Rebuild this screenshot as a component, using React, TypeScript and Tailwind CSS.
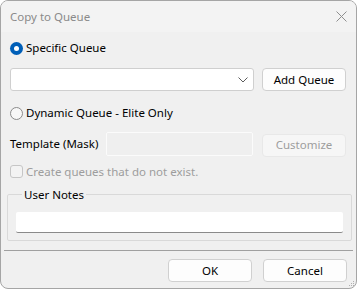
import React from 'react';

const font = { fontFamily: '"Segoe UI", "Noto Sans", sans-serif' };

function Radio({ checked, label }: { checked?: boolean; label: string }) {
  return (
    <label className="flex items-center gap-[3px] h-[14px] text-[11.5px] text-black">
      {checked ? (
        <span className="w-[13px] h-[13px] rounded-full bg-[#005fb8] flex items-center justify-center shrink-0">
          <span className="w-[5px] h-[5px] rounded-full bg-white" />
        </span>
      ) : (
        <span className="w-[13px] h-[13px] rounded-full border border-[#8b8b8b] bg-[#f7f7f7] shrink-0" />
      )}
      <span className="leading-none">{label}</span>
    </label>
  );
}

function Button({ children, disabled }: { children: React.ReactNode; disabled?: boolean }) {
  return (
    <button
      className={`w-[84px] h-[23px] rounded-[4px] border text-[11.5px] leading-none ${
        disabled ? 'bg-[#f6f6f6] border-[#e8e8e8] text-[#9d9d9d]' : 'bg-[#fdfdfd] border-[#d0d0d0] text-black'
      }`}
    >
      {children}
    </button>
  );
}

export default function App() {
  return (
    <div className="w-[358px] h-[289px] bg-white" style={font}>
      <div className="w-[357px] h-[289px] rounded-lg border border-[#a5a5a5] overflow-hidden flex flex-col bg-[#f0f0f0]">
        {/* Title bar */}
        <div className="h-[31px] bg-[#f3f3f3] flex items-center justify-between pl-[9px] pr-[9px] shrink-0">
          <span className="text-[11.5px] text-[#8a8a8a]">Copy to Queue</span>
          <svg width="11" height="11" viewBox="0 0 11 11">
            <path d="M0.5 0.5 L10.5 10.5 M10.5 0.5 L0.5 10.5" stroke="#8e8e8e" strokeWidth="1" />
          </svg>
        </div>

        {/* Body */}
        <div className="flex-1 flex flex-col px-[9px] relative">
          <div className="mt-[9px]">
            <Radio checked label="Specific Queue" />
          </div>

          <div className="mt-[13px] flex gap-[8px]">
            <div className="w-[244px] h-[23px] bg-white border border-[#cfcfcf] rounded-[3px] flex items-center justify-end pr-[5px]">
              <svg width="10" height="6" viewBox="0 0 10 6">
                <path d="M0.5 0.5 L5 5 L9.5 0.5" fill="none" stroke="#5c5c5c" strokeWidth="1" />
              </svg>
            </div>
            <Button>Add Queue</Button>
          </div>

          <div className="mt-[15px]">
            <Radio label="Dynamic Queue - Elite Only" />
          </div>

          <div className="mt-[12px] flex items-center h-[24px]">
            <span className="w-[96px] text-[11.5px] text-black">Template (Mask)</span>
            <div className="w-[147px] h-[24px] bg-[#efefef] border border-[#fbfbfb] rounded-[2px]" />
            <div className="ml-[9px]">
              <Button disabled>Customize</Button>
            </div>
          </div>

          <div className="mt-[9px] flex items-center gap-[3px] h-[13px]">
            <span className="w-[13px] h-[13px] rounded-[3px] border border-[#c6c6c6] bg-[#f3f3f3] shrink-0" />
            <span className="text-[11.5px] text-[#9d9d9d] leading-none">Create queues that do not exist.</span>
          </div>

          <fieldset className="mt-[10px] ml-[-3px] w-[345px] h-[53px] border border-[#d9d9d9] rounded-[2px] px-[8px]">
            <legend className="ml-[6px] px-[2px] text-[11.5px] text-black leading-[13px]">User Notes</legend>
            <div className="mt-[11px] h-[21px] bg-white border-b border-[#8a8a8a] rounded-[2px]" />
          </fieldset>

          <div className="mt-[9px] ml-[-6px] w-[349px] h-[1px] bg-[#a0a0a0]" />

          <div className="mt-[8px] flex justify-end gap-[11px]">
            <Button>OK</Button>
            <Button>Cancel</Button>
          </div>

          <svg width="7" height="7" viewBox="0 0 7 7" className="absolute right-[1px] bottom-[1px]">
            <rect x="5" y="1" width="1" height="1" fill="#b0b0b0" />
            <rect x="3" y="3" width="1" height="1" fill="#b0b0b0" />
            <rect x="5" y="3" width="1" height="1" fill="#b0b0b0" />
            <rect x="1" y="5" width="1" height="1" fill="#b0b0b0" />
            <rect x="3" y="5" width="1" height="1" fill="#b0b0b0" />
            <rect x="5" y="5" width="1" height="1" fill="#b0b0b0" />
          </svg>
        </div>
      </div>
    </div>
  );
}
